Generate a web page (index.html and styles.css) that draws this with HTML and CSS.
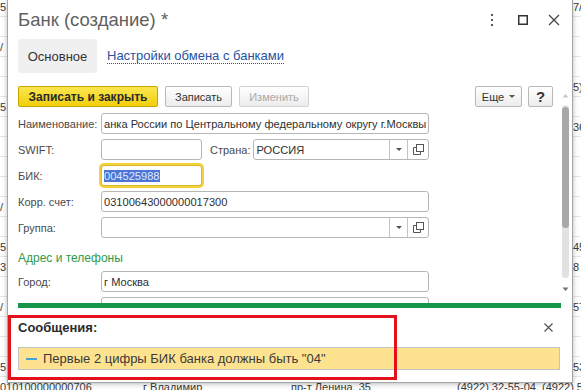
FILE: index.html
```html
<!DOCTYPE html>
<html>

<head>
    <meta charset="UTF-8">
    <title>Банк (создание)</title>
    <link rel="stylesheet" href="styles.css">
</head>

<body>
<div class="sheet">
    <div class="row"><span class="c1">5</span><span class="c4">7/</span></div>
    <div class="row"><span class="c1"></span><span class="c4"></span></div>
    <div class="row"><span class="c1">/</span><span class="c4"></span></div>
    <div class="row"><span class="c1"></span><span class="c4"></span></div>
    <div class="row"><span class="c1"></span><span class="c4">5)</span></div>
    <div class="row"><span class="c1">5</span><span class="c4"></span></div>
    <div class="row"><span class="c1"></span><span class="c4">36</span></div>
    <div class="row"><span class="c1"></span><span class="c4"></span></div>
    <div class="row"><span class="c1"></span><span class="c4"></span></div>
    <div class="row"><span class="c1"></span><span class="c4"></span></div>
    <div class="row"><span class="c1">/</span><span class="c4"></span></div>
    <div class="row"><span class="c1"></span><span class="c4"></span></div>
    <div class="row"><span class="c1">5</span><span class="c4">45</span></div>
    <div class="row"><span class="c1">3</span><span class="c4">8</span></div>
    <div class="row"><span class="c1"></span><span class="c4"></span></div>
    <div class="row"><span class="c1">/</span><span class="c4">57</span></div>
    <div class="row"><span class="c1"></span><span class="c4"></span></div>
    <div class="row"><span class="c1"></span><span class="c4"></span></div>
    <div class="row"><span class="c1">5</span><span class="c4">53</span></div>
    <div class="row last"><span class="c1">010100000000706</span><span class="c2">г Владимир</span><span class="c3">пр-т Ленина, 35</span><span class="c5">(4922) 32-55-04, (4922) 54</span></div>
</div>

<div class="dialog">
    <div class="head">
        <span class="title">Банк (создание) *</span>
        <div class="winctl">
            <span class="ctl">
                <svg width="4" height="12" viewBox="0 0 4 12"><rect x="1" y="0" width="2" height="2" fill="#555"/><rect x="1" y="5" width="2" height="2" fill="#555"/><rect x="1" y="10" width="2" height="2" fill="#555"/></svg>
            </span>
            <span class="ctl">
                <svg width="10" height="10" viewBox="0 0 10 10"><rect x="0.75" y="0.75" width="8.5" height="8.5" fill="none" stroke="#333" stroke-width="1.5"/></svg>
            </span>
            <span class="ctl">
                <svg width="12" height="12" viewBox="0 0 12 12"><path d="M1 1 L11 11 M11 1 L1 11" stroke="#444" stroke-width="1.3"/></svg>
            </span>
        </div>
    </div>

    <div class="tabs">
        <span class="tab active">Основное</span>
        <a class="tab link">Настройки обмена с банками</a>
    </div>

    <div class="main">
        <div class="form">
            <div class="toolbar">
                <span class="btn btn-primary">Записать и закрыть</span>
                <span class="btn btn-save">Записать</span>
                <span class="btn btn-edit">Изменить</span>
                <span class="spacer"></span>
                <span class="btn btn-more">Еще <i class="caret"></i></span>
                <span class="btn btn-help">?</span>
            </div>

            <div class="fields">
                <div class="field">
                    <label>Наименование:</label>
                    <div class="input wide">анка России по Центральному федеральному округу г.Москвы</div>
                </div>
                <div class="field">
                    <label>SWIFT:</label>
                    <div class="input short"></div>
                    <label class="inline">Страна:</label>
                    <div class="input select country">
                        <span class="val">РОССИЯ</span>
                        <span class="dd"><i class="caret"></i></span>
                        <span class="open">
                            <svg width="11" height="11" viewBox="0 0 11 11"><rect x="3.5" y="0.5" width="7" height="7" fill="none" stroke="#555"/><path d="M3.5 3.5 H0.5 V10.5 H7.5 V7.5" fill="none" stroke="#555"/></svg>
                        </span>
                    </div>
                </div>
                <div class="field">
                    <label>БИК:</label>
                    <div class="input short focus"><span class="sel">004525988</span></div>
                </div>
                <div class="field">
                    <label>Корр. счет:</label>
                    <div class="input wide">03100643000000017300</div>
                </div>
                <div class="field">
                    <label>Группа:</label>
                    <div class="input select wide">
                        <span class="val"></span>
                        <span class="dd"><i class="caret"></i></span>
                        <span class="open">
                            <svg width="11" height="11" viewBox="0 0 11 11"><rect x="3.5" y="0.5" width="7" height="7" fill="none" stroke="#555"/><path d="M3.5 3.5 H0.5 V10.5 H7.5 V7.5" fill="none" stroke="#555"/></svg>
                        </span>
                    </div>
                </div>
                <div class="group-title">Адрес и телефоны</div>
                <div class="field">
                    <label>Город:</label>
                    <div class="input wide">г Москва</div>
                </div>
                <div class="field">
                    <label></label>
                    <div class="input wide"></div>
                </div>
            </div>
        </div>

        <div class="scroll">
            <svg class="sc-up" width="7" height="5" viewBox="0 0 7 5"><path d="M0.5 4.5 L3.5 1 L6.5 4.5 Z" fill="#c9c9c9"/></svg>
            <div class="sc-track"><div class="sc-thumb"></div></div>
            <svg class="sc-down" width="7" height="5" viewBox="0 0 7 5"><path d="M0.5 0.5 L3.5 4 L6.5 0.5 Z" fill="#707070"/></svg>
        </div>
    </div>

    <div class="greenline"></div>

    <div class="messages">
        <div class="mhead">
            <b>Сообщения:</b>
            <svg class="mclose" width="9" height="9" viewBox="0 0 9 9"><path d="M0.5 0.5 L8.5 8.5 M8.5 0.5 L0.5 8.5" stroke="#555" stroke-width="1.2"/></svg>
        </div>
        <div class="msg"><i class="dash"></i>Первые 2 цифры БИК банка должны быть "04"</div>
    </div>

    <div class="redbox"></div>
</div>
</body>

</html>
```

FILE: styles.css
```css
* {
    box-sizing: border-box;
}

body {
    margin: 0;
    width: 581px;
    height: 390px;
    overflow: hidden;
    position: relative;
    background: #fff;
    font-family: "Liberation Sans", Arial, sans-serif;
    color: #333;
}

/* list behind the window */
.sheet {
    margin-top: -3px;
}

.row {
    display: flex;
    align-items: center;
    height: 20px;
    border-bottom: 1px solid #e6e6e6;
    font-size: 11px;
    color: #3a3a3a;
    white-space: nowrap;
}

.row span {
    flex: none;
    overflow: hidden;
}

.c1 {
    width: 7px;
}

.c4 {
    margin-left: auto;
    width: 8px;
}

.row.last .c1 {
    width: 143px;
}

.row.last .c2 {
    width: 148px;
}

.row.last .c3 {
    width: 166px;
}

/* window */
.dialog {
    position: absolute;
    left: 7px;
    top: 0;
    width: 566px;
    height: 383px;
    background: #fff;
    border: 1px solid #a6a6a6;
    border-top: none;
    box-shadow: 0 1px 5px rgba(0, 0, 0, 0.28);
    display: flex;
    flex-direction: column;
}

.head {
    height: 39px;
    display: flex;
    align-items: center;
    padding: 0 3px 0 10px;
}

.title {
    font-size: 18.5px;
    color: #5f5f5f;
}

.winctl {
    margin-left: auto;
    display: flex;
}

.ctl {
    width: 31px;
    height: 20px;
    display: flex;
    align-items: center;
    justify-content: center;
}

.tabs {
    height: 34px;
    display: flex;
    align-items: center;
    padding-left: 10px;
}

.tab {
    font-size: 13px;
}

.tab.active {
    width: 79px;
    height: 34px;
    background: #f0f0f0;
    border-radius: 3px;
    display: flex;
    align-items: center;
    justify-content: center;
    color: #333;
}

.tab.link {
    margin-left: 10px;
    color: #2753a2;
    border-bottom: 1px dotted #2753a2;
    line-height: 14px;
    margin-top: 1px;
}

.main {
    height: 230px;
    display: flex;
}

.form {
    flex: 1;
    padding: 13px 0 0 10px;
    overflow: hidden;
}

.toolbar {
    display: flex;
    gap: 7px;
    height: 21px;
}

.spacer {
    flex: 1;
}

.btn {
    height: 21px;
    border: 1px solid #b8b8b8;
    border-radius: 2px;
    background: linear-gradient(#ffffff, #ececec);
    font-size: 11px;
    color: #333;
    display: flex;
    align-items: center;
    justify-content: center;
}

.btn-primary {
    width: 140px;
    background: linear-gradient(#fbe64f, #f1cf0b);
    border-color: #c7a400;
    font-weight: bold;
    font-size: 12px;
    color: #2b2b2b;
}

.btn-save {
    width: 67px;
}

.btn-edit {
    width: 70px;
    color: #a9a9a9;
    border-color: #d2d2d2;
}

.btn-more {
    width: 47px;
    gap: 5px;
}

.btn-help {
    width: 25px;
    margin-left: -1px;
    font-size: 15px;
    font-weight: bold;
}

.caret {
    width: 0;
    height: 0;
    border-left: 3px solid transparent;
    border-right: 3px solid transparent;
    border-top: 3px solid #555;
}

.fields {
    display: flex;
    flex-direction: column;
    gap: 5px;
    margin-top: 6px;
}

.field {
    display: flex;
    align-items: center;
    height: 21px;
}

.field label {
    width: 83px;
    flex: none;
    font-size: 11px;
    color: #4a4a4a;
}

.field label.inline {
    width: auto;
    margin: 0 3px 0 8px;
}

.input {
    height: 21px;
    border: 1px solid #b6b6b6;
    border-radius: 3px;
    background: #fff;
    font-size: 11.1px;
    color: #2f2f2f;
    padding-left: 2px;
    display: flex;
    align-items: center;
    white-space: nowrap;
    overflow: hidden;
}

.input.wide {
    width: 328px;
}

.input.short {
    width: 101px;
}

.input.country {
    width: 176px;
}

.input.focus {
    border-color: #d9b928;
    box-shadow: 0 0 0 2px #f3d03c;
}

.sel {
    background: #4b76d6;
    color: #dfe8fb;
}

.select {
    padding-right: 0;
}

.select .val {
    flex: 1;
}

.select .dd {
    width: 18px;
    height: 100%;
    border-left: 1px solid #c4c4c4;
    display: flex;
    align-items: center;
    justify-content: center;
}

.select .open {
    width: 21px;
    height: 100%;
    border-left: 1px solid #c4c4c4;
    display: flex;
    align-items: center;
    justify-content: center;
}

.group-title {
    height: 23px;
    display: flex;
    align-items: flex-end;
    line-height: 14px;
    padding-bottom: 1px;
    font-size: 12px;
    color: #2e9a4c;
}

.scroll {
    width: 7px;
    margin: 0 3px 0 9px;
    display: flex;
    flex-direction: column;
}

.sc-up {
    margin-top: 20px;
}

.sc-track {
    margin-top: 7px;
    height: 173px;
    background: #e2e2e2;
    border-radius: 4px;
    padding-top: 2px;
}

.sc-thumb {
    height: 121px;
    background: #a8a8a8;
    border-radius: 4px;
}

.sc-down {
    margin-top: 9px;
}

.greenline {
    height: 5px;
    margin: 0 11px 0 10px;
    background: #16964a;
}

.messages {
    flex: 1;
    padding: 0 12px 0 10px;
}

.mhead {
    height: 39px;
    display: flex;
    align-items: center;
    font-size: 13px;
    color: #2b2b2b;
}

.mclose {
    margin-left: auto;
    margin-right: 7px;
}

.msg {
    height: 23px;
    background: #fde28f;
    border: 1px solid #c3c3c3;
    display: flex;
    align-items: center;
    font-size: 13px;
    color: #3a3a3a;
}

.dash {
    width: 11px;
    height: 2px;
    background: #45a2d6;
    margin: 0 6px 0 7px;
}

.redbox {
    position: absolute;
    left: 0;
    top: 315px;
    width: 389px;
    height: 65px;
    border: 3px solid #e4101a;
}
```
